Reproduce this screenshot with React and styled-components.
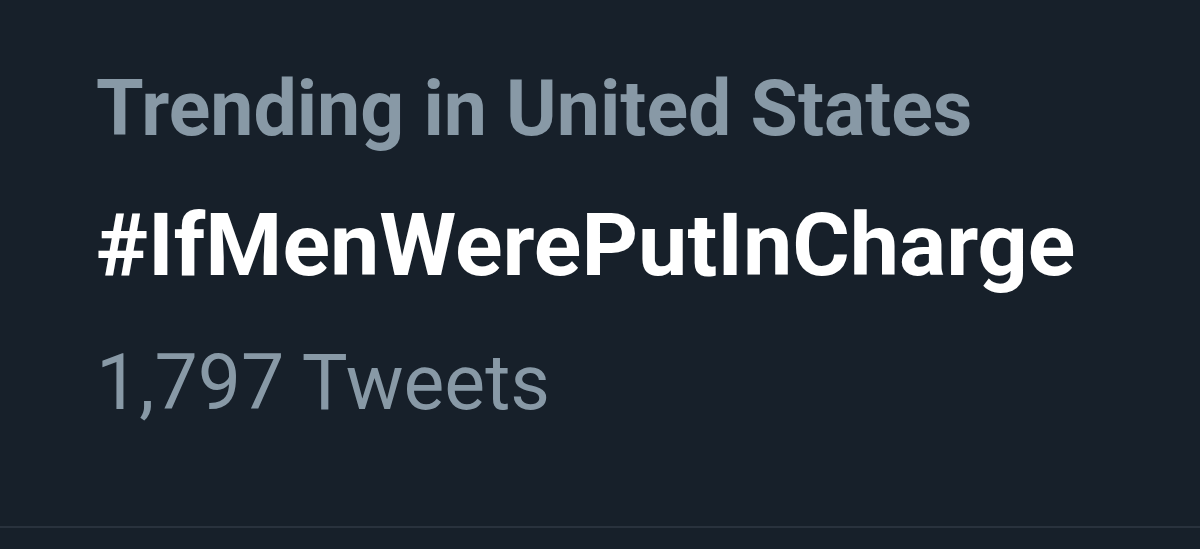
import React from 'react'
import styled, { createGlobalStyle } from 'styled-components'

const Global = createGlobalStyle`
  html, body {
    margin: 0;
    padding: 0;
    background: #17202a;
  }
  body {
    font-family: Roboto, "Liberation Sans", sans-serif;
  }
`;

export default function App() {
  return (
    <>
      <Global />
      <TrendItem>
        <Context>Trending in United States</Context>
        <Hashtag>#IfMenWerePutInCharge</Hashtag>
        <Count>1,797 Tweets</Count>
      </TrendItem>
    </>
  )
};

const TrendItem = styled.div`
  height: 528px;
  box-sizing: border-box;
  padding: 67px 0 0 96px;
  display: flex;
  flex-direction: column;
  border-bottom: 2px solid #29323d;
`;

const Context = styled.div`
  color: #8899a6;
  font-size: 77px;
  font-weight: bold;
  line-height: 84px;
`;

const Hashtag = styled.div`
  color: #ffffff;
  font-size: 88px;
  font-weight: bold;
  line-height: 104px;
  margin-top: 42px;
`;

const Count = styled.div`
  color: #8899a6;
  font-size: 77px;
  line-height: 90px;
  margin-top: 41px;
`;
